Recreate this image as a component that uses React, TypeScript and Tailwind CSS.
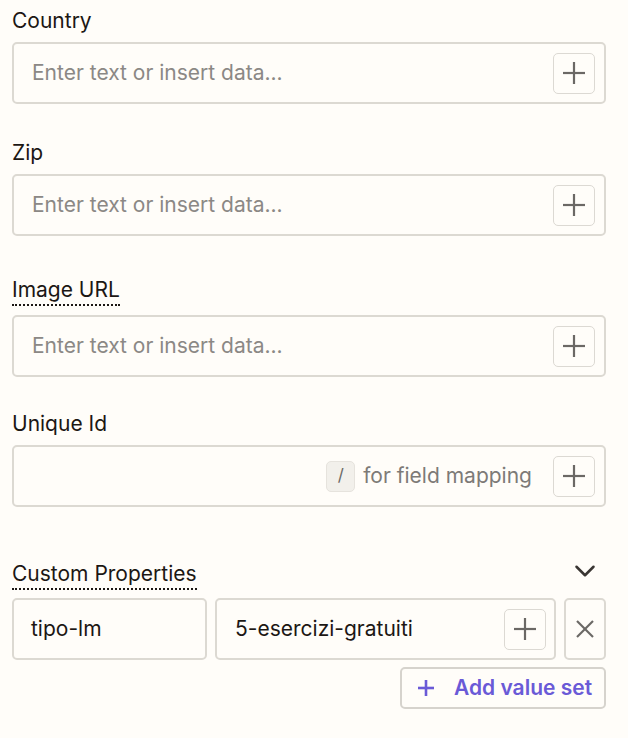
import { ChevronDown } from "lucide-react";

function PlusGlyph({ size = 22, stroke = 2.2 }: { size?: number; stroke?: number }) {
  return (
    <svg width={size} height={size} viewBox={`0 0 ${size} ${size}`} fill="none" stroke="currentColor" strokeWidth={stroke}>
      <line x1={size / 2} y1={0} x2={size / 2} y2={size} />
      <line x1={0} y1={size / 2} x2={size} y2={size / 2} />
    </svg>
  );
}

function PlusButton() {
  return (
    <div className="w-[42px] h-[41px] rounded-[5px] border border-[#dcd9d3] bg-[#fffdf9] flex items-center justify-center text-[#6b6865]">
      <PlusGlyph />
    </div>
  );
}

function TextField({ placeholder }: { placeholder?: string }) {
  return (
    <div className="h-[62px] rounded-[5px] border-2 border-[#dcd9d2] bg-[#fffdf9] flex items-center pl-[18px] pr-[9px]">
      <span className="flex-1 text-[21px] text-[#8b8885]">{placeholder}</span>
      <PlusButton />
    </div>
  );
}

export default function App() {
  return (
    <div
      className="min-h-[738px] bg-[#fffdf9] text-[#1c1714] pt-[7px]"
      style={{ fontFamily: "Inter, 'Noto Sans', sans-serif" }}
    >
      <div className="ml-3 w-[594px] flex flex-col">
        <div className="text-[21px] leading-7 mb-[7px]">Country</div>
        <TextField placeholder="Enter text or insert data..." />

        <div className="text-[21px] leading-7 mt-[35px] mb-[7px]">Zip</div>
        <TextField placeholder="Enter text or insert data..." />

        <div className="mt-[40px] mb-[9px]">
          <span className="inline-block text-[21px] leading-7 border-b-2 border-dotted border-[#1c1714]">
            Image URL
          </span>
        </div>
        <TextField placeholder="Enter text or insert data..." />

        <div className="text-[21px] leading-7 mt-[33px] mb-[7px]">Unique Id</div>
        <div className="h-[62px] rounded-[5px] border-2 border-[#dcd9d2] bg-[#fffdf9] flex items-center justify-end pr-[9px]">
          <span className="w-[29px] h-[31px] rounded-[5px] bg-[#f2f0eb] border border-[#e6e3dd] flex items-center justify-center text-[17px] text-[#6b6865] mr-[8px]">
            /
          </span>
          <span className="text-[21px] text-[#7d7a77] mr-[21px]">for field mapping</span>
          <PlusButton />
        </div>

        <div className="mt-[53px] mb-[8px] flex items-start justify-between">
          <span className="inline-block text-[21px] leading-7 border-b-2 border-dotted border-[#1c1714]">
            Custom Properties
          </span>
          <ChevronDown className="w-[34px] h-[34px] text-[#3a3633] mr-[4px] -mt-[6px]" strokeWidth={1.8} />
        </div>

        <div className="flex gap-2 h-[62px]">
          <div className="w-[195px] rounded-[5px] border-2 border-[#dcd9d2] flex items-center pl-[17px] text-[21px]">
            tipo-lm
          </div>
          <div className="flex-1 rounded-[5px] border-2 border-[#dcd9d2] flex items-center pl-[18px] pr-[8px] text-[21px]">
            <span className="flex-1">5-esercizi-gratuiti</span>
            <PlusButton />
          </div>
          <div className="w-[42px] rounded-[5px] border-2 border-[#dcd9d2] flex items-center justify-center text-[#6b6865]">
            <svg width="18" height="18" viewBox="0 0 18 18" fill="none" stroke="currentColor" strokeWidth={2.2}>
              <line x1="1" y1="1" x2="17" y2="17" />
              <line x1="17" y1="1" x2="1" y2="17" />
            </svg>
          </div>
        </div>

        <div className="flex justify-end mt-[7px]">
          <div className="w-[206px] h-[42px] rounded-[5px] border-2 border-[#d6d3cd] flex items-center pl-[16px] gap-[20px] text-[#6a5ad7]">
            <PlusGlyph size={16} stroke={2.6} />
            <span className="text-[21px] font-semibold">Add value set</span>
          </div>
        </div>
      </div>
    </div>
  );
}
